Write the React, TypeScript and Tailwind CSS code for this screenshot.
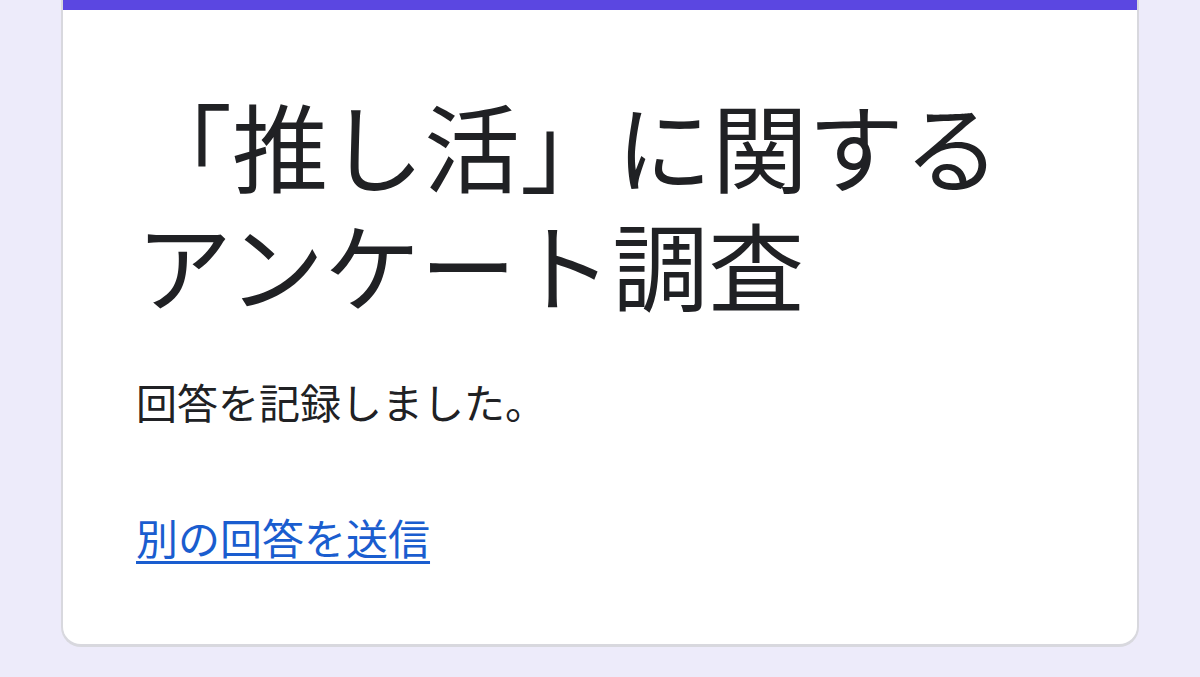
export default function App() {
  return (
    <div
      className="min-h-[677px] w-[1200px] bg-[#edebfa] px-[61px] pb-[33px]"
      style={{ fontFamily: '"Noto Sans CJK JP", "Noto Sans", sans-serif' }}
    >
      <div className="overflow-hidden rounded-b-[20px] border-x-2 border-b-[3px] border-[#d8d8de] bg-white">
        <div className="h-[10px] bg-[#5b47e1]" />
        <div className="pl-[73px] pr-8 pt-[74px] pb-[79px]">
          <h1 className="text-[96px] leading-[119px] font-normal text-[#202124]">
            「推し活」に関する
            <br />
            アンケート調査
          </h1>
          <p className="mt-[51px] text-[41px] leading-[56px] text-[#202124]">
            回答を記録しました。
          </p>
          <a
            href="#"
            className="mt-[80px] inline-block text-[42px] leading-[56px] text-[#1a5dcf] underline decoration-[3px] underline-offset-[6px]"
          >
            別の回答を送信
          </a>
        </div>
      </div>
    </div>
  );
}
